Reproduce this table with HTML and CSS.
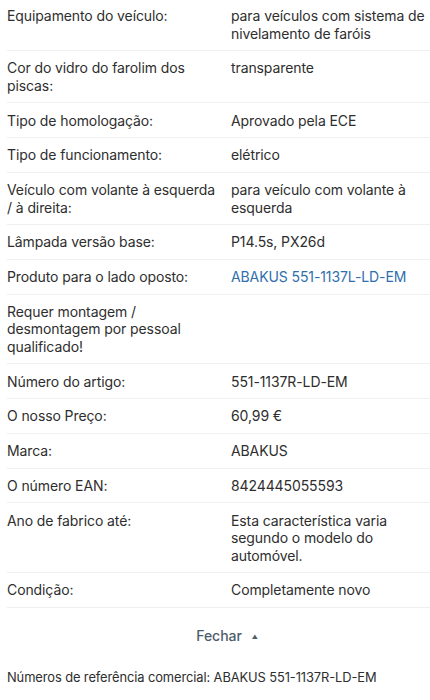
FILE: index.html
```html
<!DOCTYPE html>
<html lang="pt">
<head>
<meta charset="utf-8"/>
<meta content="width=device-width, initial-scale=1.0" name="viewport"/>
<title>Características do produto</title>
<link rel="stylesheet" href="styles.css">
</head>
<body>
<div class="specs">
<div class="spec-row">
<div class="spec-label">Equipamento do veículo:</div>
<div class="spec-value">para veículos com sistema de nivelamento de faróis</div>
</div>
<div class="spec-row">
<div class="spec-label">Cor do vidro do farolim dos piscas:</div>
<div class="spec-value">transparente</div>
</div>
<div class="spec-row">
<div class="spec-label">Tipo de homologação:</div>
<div class="spec-value">Aprovado pela ECE</div>
</div>
<div class="spec-row">
<div class="spec-label">Tipo de funcionamento:</div>
<div class="spec-value">elétrico</div>
</div>
<div class="spec-row">
<div class="spec-label">Veículo com volante à esquerda / à direita:</div>
<div class="spec-value">para veículo com volante à esquerda</div>
</div>
<div class="spec-row">
<div class="spec-label">Lâmpada versão base:</div>
<div class="spec-value">P14.5s, PX26d</div>
</div>
<div class="spec-row">
<div class="spec-label">Produto para o lado oposto:</div>
<div class="spec-value"><a href="#">ABAKUS 551-1137L-LD-EM</a></div>
</div>
<div class="spec-row">
<div class="spec-label">Requer montagem / desmontagem por pessoal qualificado!</div>
<div class="spec-value"></div>
</div>
<div class="spec-row">
<div class="spec-label">Número do artigo:</div>
<div class="spec-value">551-1137R-LD-EM</div>
</div>
<div class="spec-row">
<div class="spec-label">O nosso Preço:</div>
<div class="spec-value">60,99 €</div>
</div>
<div class="spec-row">
<div class="spec-label">Marca:</div>
<div class="spec-value">ABAKUS</div>
</div>
<div class="spec-row">
<div class="spec-label">O número EAN:</div>
<div class="spec-value">8424445055593</div>
</div>
<div class="spec-row">
<div class="spec-label">Ano de fabrico até:</div>
<div class="spec-value">Esta característica varia segundo o modelo do automóvel.</div>
</div>
<div class="spec-row">
<div class="spec-label">Condição:</div>
<div class="spec-value">Completamente novo</div>
</div>
</div>
<button class="toggle">Fechar <span class="arrow">▲</span></button>
<p class="refs">Números de referência comercial: ABAKUS 551-1137R-LD-EM</p>
</body>
</html>
```

FILE: styles.css
```css
body {
  margin: 0;
  font-family: 'Inter', 'Noto Sans', sans-serif;
  font-size: 14px;
  line-height: 17.5px;
  letter-spacing: -0.1px;
  color: #2e2e2e;
  background: #fff;
}

.specs {
  padding-left: 7px;
}

.spec-row {
  display: grid;
  grid-template-columns: 224px 1fr;
  padding: 8.25px 0 8px;
  border-bottom: 1px solid #f0f0f0;
}

.spec-row:first-child {
  padding-top: 7px;
}

.spec-label {
  padding-right: 12px;
}

.spec-value a {
  color: #2f6fad;
  text-decoration: none;
}

.toggle {
  display: block;
  margin: 19px auto 0;
  padding: 0 0 0 24px;
  border: none;
  background: none;
  font-family: inherit;
  font-size: 14px;
  font-weight: 500;
  line-height: 17px;
  color: #4e5d6c;
  cursor: pointer;
}

.arrow {
  font-size: 6px;
  margin-left: 6px;
  vertical-align: 2px;
}

.refs {
  margin: 24px 0 0;
  padding-left: 7px;
  font-size: 12.9px;
  line-height: 17px;
  color: #2e2e2e;
}
```
